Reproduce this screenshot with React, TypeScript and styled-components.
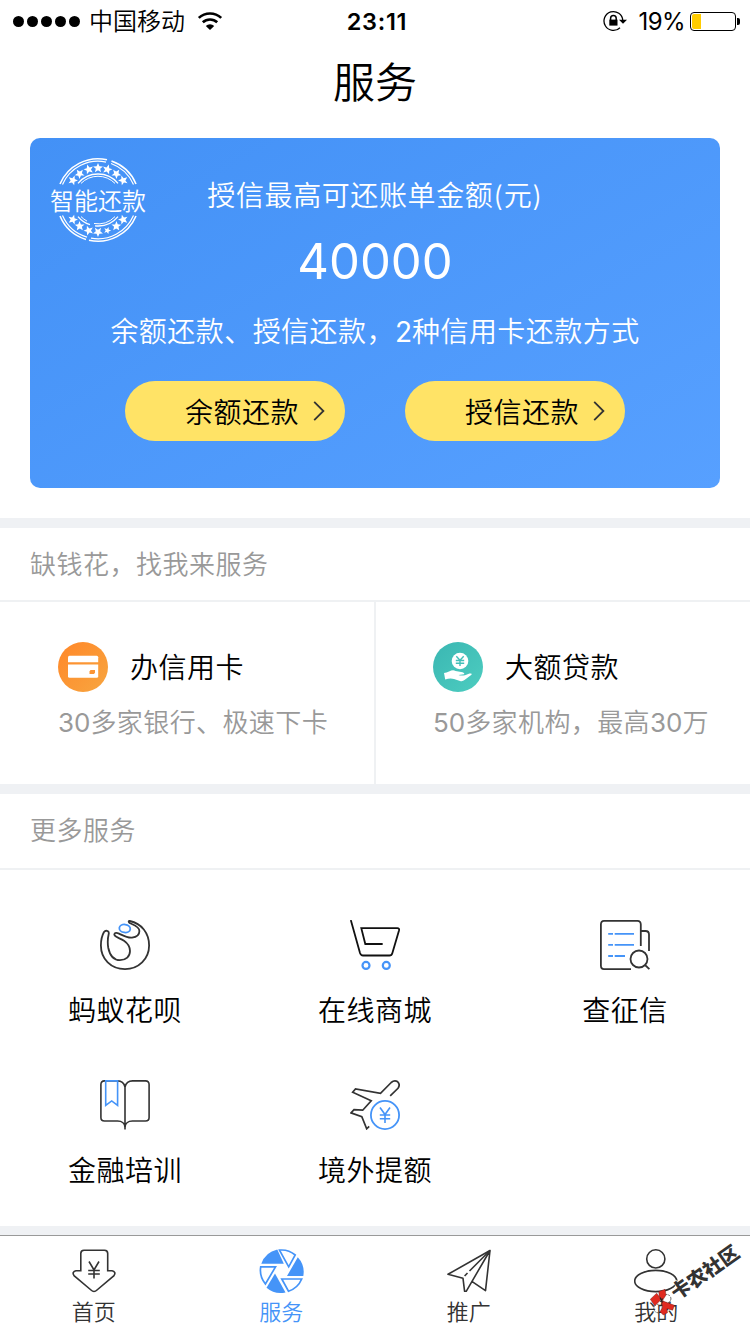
import type { ReactNode } from "react";
import styled, { createGlobalStyle } from "styled-components";

const DARK = "#333333";
const BLUE = "#4594f8";

const STAR = "0,-4.6 1.3,-1.5 4.5,-1.4 2,0.7 2.8,3.8 0,2 -2.8,3.8 -2,0.7 -4.5,-1.4 -1.3,-1.5";
const TOP_STARS = [-52, -35, -17, 0, 17, 35, 52];
const BOTTOM_STARS = [128, 145, 163, 180, 197, 215, 232];

function Stamp() {
  return (
    <svg width="96" height="86" viewBox="-48 -43 96 86" fill="none">
      <g stroke="#fff">
        <path d="M-38 -16A41.200 41.200 0 0 1 9 -40.200" strokeWidth="1.600" />
        <path d="M13.500 -38.900A41.200 41.200 0 0 1 38 -16" strokeWidth="1.600" />
        <path d="M-35.500 -15.500A38.700 38.700 0 0 1 8 -37.900" strokeWidth="1.200" />
        <path d="M13 -36.500A38.700 38.700 0 0 1 35.500 -15.500" strokeWidth="1.200" />
        <path d="M-38 16A41.200 41.200 0 0 0 -12 39.400" strokeWidth="1.600" />
        <path d="M-9 40.200A41.200 41.200 0 0 0 38 16" strokeWidth="1.600" />
        <path d="M-35.500 15.500A38.700 38.700 0 0 0 -11 37.100" strokeWidth="1.200" />
        <path d="M-7 38.100A38.700 38.700 0 0 0 35.500 15.500" strokeWidth="1.200" />
        <path d="M-20 -16.600A26 26 0 0 1 20 -16.600" strokeWidth="1.300" />
        <path d="M-17 -16.600A23.800 23.800 0 0 1 17 -16.600" strokeWidth="1" />
        <path d="M-20 16.600A26 26 0 0 0 -8 24.700M-3 25.800A26 26 0 0 0 20 16.600" strokeWidth="1.300" />
        <path d="M-17 16.600A23.800 23.800 0 0 0 -11 21.100M-4 23.500A23.800 23.800 0 0 0 17 16.600" strokeWidth="1" />
      </g>
      {[...TOP_STARS, ...BOTTOM_STARS].map((angle) => (
        <polygon
          key={angle}
          points={STAR}
          fill="#fff"
          transform={`rotate(${angle}) translate(0 -32) scale(${Math.abs(angle) === 163 ? 0.8 : 1.1})`}
        />
      ))}
    </svg>
  );
}

const WifiIcon = () => (
  <svg width="26" height="20" viewBox="0 0 26 20" fill="none" stroke="#000" strokeWidth="2.600">
    <path d="M1.800 6.900A16.300 16.300 0 0 1 24.200 6.900" />
    <path d="M5.800 11.300A10.500 10.500 0 0 1 20.200 11.300" />
    <path d="M13 19L8.800 14.900A6 6 0 0 1 17.200 14.900Z" fill="#000" stroke="none" />
  </svg>
);

const LockIcon = () => (
  <svg width="24" height="22" viewBox="0 0 24 22" fill="none" stroke="#000" strokeWidth="1.300">
    <path d="M17 17.700A9.400 9.400 0 1 1 19.800 10.500" />
    <path d="M16 9.800H24L20 13.800Z" fill="#000" stroke="none" />
    <path d="M7.600 10V8.200A2.800 2.800 0 0 1 13.200 8.200V10" strokeWidth="1.500" />
    <rect x="6.300" y="9.600" width="8.200" height="6" fill="#000" stroke="none" />
  </svg>
);

const Chevron = () => (
  <svg width="12" height="20" viewBox="0 0 12 20" fill="none" stroke="#333" strokeWidth="1.800">
    <path d="M1.200 0.800L10.400 10L1.200 19.200" />
  </svg>
);

const CreditCardIcon = () => (
  <svg width="50" height="50" viewBox="0 0 50 50">
    <defs>
      <linearGradient id="orange" x1="0" y1="0" x2="1" y2="1">
        <stop offset="0.100" stopColor="#ff8a2b" />
        <stop offset="1" stopColor="#f7a640" />
      </linearGradient>
    </defs>
    <circle cx="25" cy="25" r="25" fill="url(#orange)" />
    <path d="M10 20.300V15.200Q10 13.700 11.500 13.700H38.700Q40.200 13.700 40.200 15.200V20.300Z" fill="#fff" />
    <path d="M10 22.500H40.200V34.200Q40.200 35.700 38.700 35.700H11.500Q10 35.700 10 34.200Z" fill="#fff" />
    <path d="M32.500 28H37V30.500L36 32H31.500V29.500Z" fill="#fb9535" />
  </svg>
);

const LoanIcon = () => (
  <svg width="50" height="50" viewBox="0 0 50 50">
    <defs>
      <linearGradient id="teal" x1="0" y1="0" x2="1" y2="1">
        <stop offset="0.100" stopColor="#3cb9b4" />
        <stop offset="1" stopColor="#4dcdc0" />
      </linearGradient>
    </defs>
    <circle cx="25" cy="25" r="25" fill="url(#teal)" />
    <circle cx="27" cy="19" r="8.300" fill="#fff" />
    <path
      d="M23.300 14.200L27 18.200L30.700 14.200M27 18.200V24M22.800 18.500H31.200M22.800 21.300H31.200"
      fill="none"
      stroke="#42bfb8"
      strokeWidth="1.400"
    />
    <path
      d="M11 31Q13.500 30.800 16 29.500Q20 27.500 22.500 29L29.500 30.200Q32 31 31 32.300L25.500 33Q28 34 32 33.200L36.500 31.600Q39.500 31 38.500 32.700L31.500 38Q29.500 39.700 27 38.900L21 37Q17 36 12.200 37.500Z"
      fill="#fff"
    />
  </svg>
);

const HuabeiIcon = () => (
  <svg width="50" height="50" viewBox="0 0 50 50" fill="none" stroke={DARK} strokeWidth="1.800">
    <path d="M29.800 1C41.500 3.500 49.100 13 49.100 25.500C49.100 39 38.500 49.100 25 49.100C11 49.100 0.900 39 0.900 25.500C0.900 20 2 15.500 4 12C5.500 10 9.200 10.500 8.800 13.500C7.600 18.500 7.200 22 8.300 28C10 36 14 40.200 20 40.200C26 40.200 30 36.500 30 31C30 26.500 28 23.500 24 20.700C20 18 15 17.500 14.300 14.500C14.300 12.300 17 12.700 19 13.600C24 16 27 18 32 17.600C37 17 39.400 14 39.400 11C39.400 6.500 34 5 30 3.200C28.300 2.200 28.300 0.800 29.800 1Z" />
    <ellipse cx="24.800" cy="8.500" rx="5.500" ry="4" stroke={BLUE} transform="rotate(6 24.800 8.500)" />
  </svg>
);

const CartIcon = () => (
  <svg width="50" height="50" viewBox="0 0 50 50" fill="none" stroke="#111" strokeWidth="1.800">
    <path
      d="M1 0.800L10 33Q10.800 35.500 13 35.500H39.500Q41.700 35.500 42.300 33.300L49 10.500Q49.600 8.200 47.300 8.200H11.300L15.300 24H32"
      strokeLinecap="round"
    />
    <circle cx="16" cy="45.400" r="3.500" stroke={BLUE} strokeWidth="2.200" />
    <circle cx="36.300" cy="45.400" r="3.500" stroke={BLUE} strokeWidth="2.200" />
  </svg>
);

const ReportIcon = () => (
  <svg width="50" height="50" viewBox="0 0 50 50" fill="none" stroke={DARK} strokeWidth="1.800">
    <path d="M40.800 26V4.500Q40.800 0.900 37.500 0.900H4Q0.900 0.900 0.900 4.500V45.500Q0.900 49.100 4 49.100H31" />
    <path d="M41 11H45.500Q49 11 49 14.500V31" />
    <circle cx="39" cy="39" r="8.500" />
    <path d="M45 45L49.400 49.200" />
    <path
      d="M8.200 13.900H13M14.700 13.900H34M8.200 24.900H13M14.700 24.900H34M8.200 36H13M14.700 36H25"
      stroke={BLUE}
    />
  </svg>
);

const BookIcon = () => (
  <svg width="50" height="50" viewBox="0 0 50 50" fill="none" stroke={DARK} strokeWidth="1.600">
    <path d="M25 49.500V7C24 3 21 0.900 17.500 0.900H4.500Q0.900 0.900 0.900 4.500V37.500Q0.900 41 4.500 41H17.500C22 41 25 43.500 25 47.500C25 43.500 28 41 32.500 41H45.500Q49.100 41 49.100 37.500V4.500Q49.100 0.900 45.500 0.900H32.500C29 0.900 26 3 25 7" />
    <path d="M5.700 0.900H17.600V25.300L11.700 20.900L5.700 25.300Z" stroke={BLUE} />
  </svg>
);

const PlaneIcon = () => (
  <svg width="50" height="50" viewBox="0 0 50 50" fill="none" stroke={DARK} strokeWidth="1.700">
    <path d="M40.200 15.800L48 8.300Q50.500 4.500 47.700 1.800Q44.500 -0.300 41.200 2.500L30.500 13.300L5.500 9L2.700 12.200L21.200 20.800L12.700 30.200L4 29.700L1 32.900L11.800 36.700L16.700 48.800L19.200 46.400" />
    <g stroke={BLUE} strokeWidth="1.800">
      <circle cx="35" cy="35" r="14.100" />
      <path d="M30 27.500L35 34.500L40 27.500M35 34.500V43M29.800 35H40.200M29.800 38.800H40.200" strokeWidth="1.600" />
    </g>
  </svg>
);

const HomeTabIcon = () => (
  <svg width="44" height="44" viewBox="0 0 44 44" fill="none" stroke={DARK} strokeWidth="1.600">
    <path d="M8.800 21.700V4.500Q8.800 1.200 12 1.200H32.500Q35.700 1.200 35.700 4.500V21.700H40Q44.500 23 42 26.600L25 41Q22 44 19 41L2 26.600Q-0.500 23 4 21.700Z" />
    <path d="M17 12.500L22 21L27 12.500M22 21V29.500M16.200 21.500H27.800M16.200 25H27.800" />
  </svg>
);

const ServiceTabIcon = () => (
  <svg width="45" height="44" viewBox="0 0 45 44" fill={BLUE}>
    <path d="M18.300 0.500L24.800 14.800H2.300A22 22 0 0 1 18.300 0.500Z" />
    <path d="M38.800 8.200A22 22 0 0 1 44.300 27H28Z" />
    <path d="M16 24.500L26.500 43.400A22 22 0 0 1 7.500 38.700Z" />
    <g fill="none" stroke={BLUE} strokeWidth="1.700">
      <path d="M20.500 1.100A21 21 0 0 1 36.200 6L29.700 17.800Z" />
      <path d="M22.800 30H42.700A21.500 21.500 0 0 1 29.500 42.200Z" />
      <path d="M1.700 17.900H16.500L6.400 35A21.500 21.500 0 0 1 1.700 17.900Z" />
    </g>
  </svg>
);

const PromoteTabIcon = () => (
  <svg
    width="44"
    height="44"
    viewBox="0 0 44 44"
    fill="none"
    stroke={DARK}
    strokeWidth="1.600"
    strokeLinejoin="round"
  >
    <path d="M43 1.500L1 25.300L16 29.300L17.600 42.300H19.200L43 1.500L38.500 41.700L25.200 32.600" />
    <path d="M43 1.500L22.500 22M20.500 24L17.600 27" />
  </svg>
);

const MineTabIcon = () => (
  <svg width="44" height="44" viewBox="0 0 44 44" fill="none" stroke={DARK} strokeWidth="1.600">
    <circle cx="21.800" cy="9.900" r="9.100" />
    <ellipse cx="21.700" cy="32" rx="21" ry="10.600" />
  </svg>
);

function CommunityMark() {
  return (
    <WatermarkStyled width="110" height="100" viewBox="0 0 110 100">
      <g fill="none" stroke="#222" strokeWidth="0.700" strokeDasharray="2 1">
        <circle cx="26.700" cy="64.700" r="4.200" fill="#fff" />
        <circle cx="18" cy="74.500" r="4.200" />
      </g>
      <g fill="#e02a20" stroke="#5a100c" strokeWidth="0.400">
        <path d="M18.800 57.500L25 55.300L26 61L22.500 66.500L19.200 62.500Z" />
        <path d="M10.300 65.300L16.700 59.200L21.300 65.500L14.700 71.800Z" />
        <path d="M21.500 66.500L34.500 71.300L32.700 76.200L26.900 74.700L27.500 78.700L23.300 81L20 77.700L22.500 73.500Z" />
      </g>
      <path d="M20 63.500L22.500 68.500M22.500 64.500L20.500 68" stroke="#222" strokeWidth="1.200" />
      <text x="65" y="45.500" textAnchor="middle" transform="rotate(-35 65 38.500)">
        卡农社区
      </text>
    </WatermarkStyled>
  );
}

interface Entry {
  label: string;
  icon: ReactNode;
}

const FINANCE: (Entry & { hint: ReactNode })[] = [
  {
    label: "办信用卡",
    hint: (
      <>
        <b>30</b>多家银行、极速下卡
      </>
    ),
    icon: <CreditCardIcon />,
  },
  {
    label: "大额贷款",
    hint: (
      <>
        <b>50</b>多家机构，最高<b>30</b>万
      </>
    ),
    icon: <LoanIcon />,
  },
];

const SERVICES: Entry[] = [
  { label: "蚂蚁花呗", icon: <HuabeiIcon /> },
  { label: "在线商城", icon: <CartIcon /> },
  { label: "查征信", icon: <ReportIcon /> },
  { label: "金融培训", icon: <BookIcon /> },
  { label: "境外提额", icon: <PlaneIcon /> },
];

const TABS: (Entry & { active?: boolean })[] = [
  { label: "首页", icon: <HomeTabIcon /> },
  { label: "服务", icon: <ServiceTabIcon />, active: true },
  { label: "推广", icon: <PromoteTabIcon /> },
  { label: "我的", icon: <MineTabIcon /> },
];

export default function App() {
  return (
    <Screen>
      <GlobalStyle />
      <StatusBar>
        <StatusSide>
          <Signal>
            {[1, 2, 3, 4, 5].map((dot) => (
              <i key={dot} />
            ))}
          </Signal>
          <span>中国移动</span>
          <WifiIcon />
        </StatusSide>
        <Clock>23:11</Clock>
        <StatusSide $end>
          <LockIcon />
          <Percent>19%</Percent>
          <Battery>
            <div />
          </Battery>
        </StatusSide>
      </StatusBar>
      <Title>服务</Title>

      <Card>
        <StampBadge>
          <Stamp />
          <span>智能还款</span>
        </StampBadge>
        <CardLabel>授信最高可还账单金额(元)</CardLabel>
        <Amount>40000</Amount>
        <CardText>
          余额还款、授信还款，<b>2</b>种信用卡还款方式
        </CardText>
        <Actions>
          <PillButton>
            余额还款
            <Chevron />
          </PillButton>
          <PillButton>
            授信还款
            <Chevron />
          </PillButton>
        </Actions>
      </Card>

      <Divider />
      <SectionTitle $height={74}>缺钱花，找我来服务</SectionTitle>
      <FinanceRow>
        {FINANCE.map(({ label, hint, icon }) => (
          <FinanceCell key={label}>
            <div className="heading">
              {icon}
              <span>{label}</span>
            </div>
            <p>{hint}</p>
          </FinanceCell>
        ))}
      </FinanceRow>

      <Divider />
      <SectionTitle $height={76}>更多服务</SectionTitle>
      <ServiceGrid>
        {SERVICES.map(({ label, icon }) => (
          <ServiceItem key={label}>
            {icon}
            <span>{label}</span>
          </ServiceItem>
        ))}
      </ServiceGrid>
      <Filler />

      <TabBar>
        {TABS.map(({ label, icon, active }) => (
          <Tab key={label} $active={active}>
            {icon}
            <span>{label}</span>
          </Tab>
        ))}
      </TabBar>
      <CommunityMark />
    </Screen>
  );
}

const GlobalStyle = createGlobalStyle`
  * {
    box-sizing: border-box;
  }
  body {
    margin: 0;
    background: #fff;
    font-family: Inter, "Noto Sans CJK SC", sans-serif;
    color: #000;
  }
  p {
    margin: 0;
  }
  b {
    font-weight: 400;
    letter-spacing: 0;
  }
  svg {
    display: block;
    flex-shrink: 0;
  }
`;

const Screen = styled.div`
  position: relative;
  display: flex;
  flex-direction: column;
  width: 750px;
  height: 1334px;
  overflow: hidden;
  background: #fff;
  font-weight: 350;
`;

const StatusBar = styled.header`
  display: grid;
  grid-template-columns: 1fr auto 1fr;
  align-items: center;
  height: 41px;
  padding: 0 11px 0 13px;
  font-size: 24px;
  line-height: 41px;
`;

const StatusSide = styled.div<{ $end?: boolean }>`
  display: flex;
  align-items: center;
  justify-content: ${({ $end }) => ($end ? "flex-end" : "flex-start")};

  > span {
    padding-top: 1px;
  }
  > span + svg {
    margin-left: 12px;
  }
`;

const Signal = styled.div`
  display: flex;
  gap: 3px;
  margin-right: 9px;

  i {
    width: 11px;
    height: 11px;
    border-radius: 50%;
    background: #000;
  }
`;

const Clock = styled.div`
  padding: 1px 0 0 2px;
  font-weight: 600;
  font-size: 23.5px;
  letter-spacing: 0.7px;
`;

const Percent = styled.div`
  margin: 0 5px 0 12px;
  padding-top: 1px;
  font-size: 24px;
  font-weight: 400;
  letter-spacing: -0.6px;
`;

const Battery = styled.div`
  position: relative;
  width: 46px;
  height: 19px;
  margin-right: 3px;
  padding: 1px;
  border: 1px solid #000;
  border-radius: 4px;

  div {
    width: 9px;
    height: 15px;
    border-radius: 2px 0 0 2px;
    background: #ffcc00;
  }

  &::after {
    content: "";
    position: absolute;
    top: 5px;
    right: -5px;
    width: 3px;
    height: 7px;
    border-radius: 0 2px 2px 0;
    background: #000;
  }
`;

const Title = styled.h1`
  height: 97px;
  margin: 0;
  font-size: 42px;
  font-weight: 350;
  line-height: 83px;
  text-align: center;
`;

const Card = styled.section`
  position: relative;
  display: flex;
  flex-direction: column;
  align-items: center;
  height: 350px;
  margin: 0 30px 30px;
  padding-top: 38px;
  border-radius: 10px;
  background: linear-gradient(150deg, #4391f6, #57a0ff);
  color: #fff;
`;

const StampBadge = styled.div`
  position: absolute;
  top: 19px;
  left: 20px;
  display: grid;
  place-items: center;
  font-size: 24px;

  > * {
    grid-area: 1 / 1;
  }
  span {
    padding-top: 3px;
    line-height: 30px;
  }
`;

const CardLabel = styled.p`
  font-size: 28px;
  line-height: 40px;
  letter-spacing: 0.6px;
`;

const Amount = styled.p`
  margin-top: 12px;
  font-size: 49px;
  font-weight: 400;
  line-height: 68px;
`;

const CardText = styled.p`
  margin-top: 16px;
  font-size: 28px;
  line-height: 40px;
  letter-spacing: 0.45px;
`;

const Actions = styled.div`
  display: flex;
  gap: 60px;
  margin-top: 29px;
`;

const PillButton = styled.button`
  display: flex;
  align-items: center;
  justify-content: flex-end;
  gap: 14px;
  width: 220px;
  height: 60px;
  padding: 0 20px 0 0;
  border: none;
  border-radius: 30px;
  background: #ffe366;
  color: #000;
  font: inherit;
  font-size: 28px;
  letter-spacing: 0.5px;
`;

const Divider = styled.div`
  height: 10px;
  background: #eff1f4;
`;

const SectionTitle = styled.h2<{ $height: number }>`
  height: ${({ $height }) => $height}px;
  margin: 0;
  padding-left: 30px;
  border-bottom: 2px solid #eff1f3;
  color: #999;
  font-size: 26px;
  font-weight: 350;
  line-height: 74px;
  letter-spacing: 0.5px;
`;

const FinanceRow = styled.section`
  display: grid;
  grid-template-columns: 376px 1fr;
  height: 182px;
`;

const FinanceCell = styled.div`
  padding: 40px 0 0 57px;

  &:first-child {
    padding-left: 58px;
    border-right: 2px solid #eff1f3;
  }
  .heading {
    display: flex;
    align-items: center;
    gap: 22px;
    font-size: 28px;
    line-height: 48px;
    letter-spacing: 0.5px;

    span {
      padding-top: 2px;
    }
  }
  p {
    margin-top: 11px;
    color: #999;
    font-size: 26px;
    line-height: 40px;
    letter-spacing: 0.4px;
    white-space: nowrap;
  }
`;

const ServiceGrid = styled.section`
  display: grid;
  grid-template-columns: repeat(3, 1fr);
  grid-auto-rows: 160px;
  height: 356px;
  padding-top: 50px;
`;

const ServiceItem = styled.div`
  display: flex;
  flex-direction: column;
  align-items: center;
  gap: 21px;
  font-size: 28px;
  line-height: 40px;
  letter-spacing: 0.5px;
`;

const Filler = styled.div`
  flex: 1;
  background: #eff1f4;
`;

const TabBar = styled.nav`
  display: grid;
  grid-template-columns: repeat(4, 1fr);
  height: 99px;
  padding-top: 13px;
  border-top: 1px solid #999;
`;

const Tab = styled.div<{ $active?: boolean }>`
  display: flex;
  flex-direction: column;
  align-items: center;
  gap: 4px;
  color: ${({ $active }) => ($active ? BLUE : DARK)};
  font-size: 22px;
  line-height: 31px;
`;

const WatermarkStyled = styled.svg`
  position: absolute;
  right: 0;
  bottom: 0;

  text {
    font-size: 19.5px;
    font-weight: 900;
    fill: #333;
    stroke: #fff;
    stroke-width: 1px;
    paint-order: stroke;
  }
`;
